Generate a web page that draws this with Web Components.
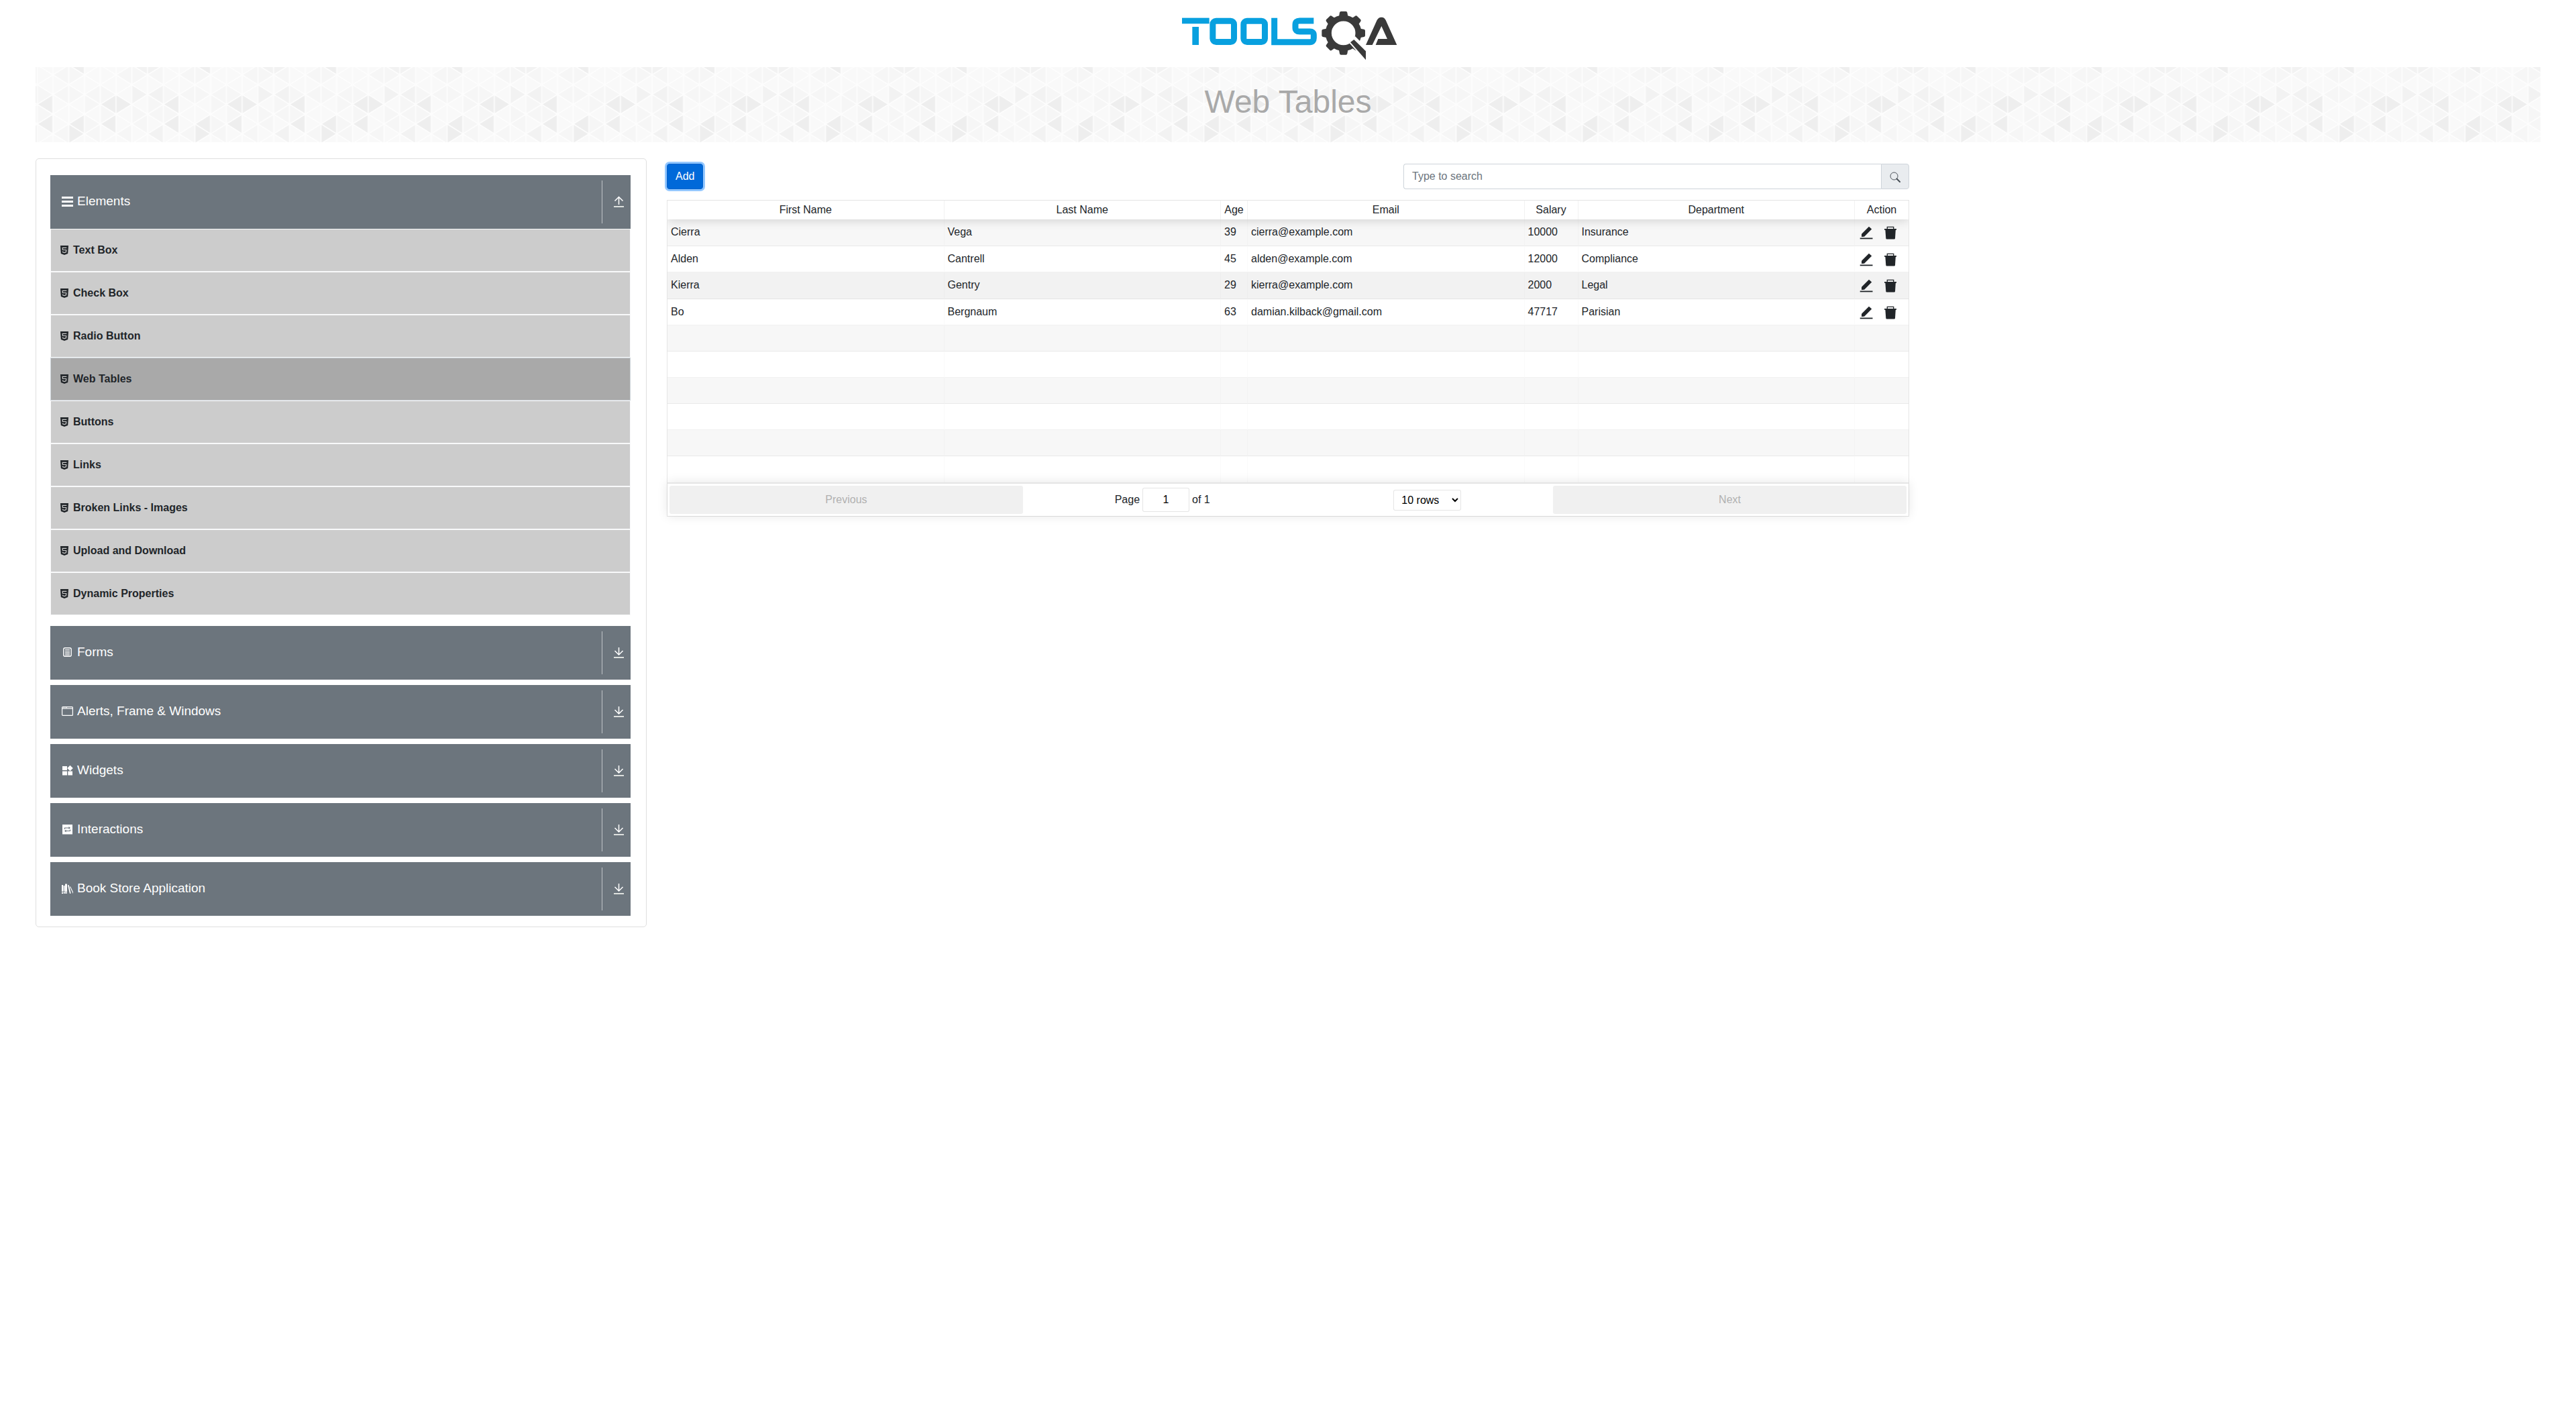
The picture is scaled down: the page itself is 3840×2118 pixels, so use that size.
<!DOCTYPE html>
<html lang="en">
<head>
<meta charset="utf-8">
<title>ToolsQA - Web Tables</title>
<style>
  body {
    margin: 0;
    background: #fff;
    color: #212529;
    font: 16px/24px "Liberation Sans", Arial, sans-serif;
  }
</style>
</head>
<body>
<qa-page>
  <qa-logo slot="logo"></qa-logo>
  <qa-banner slot="banner">Web Tables</qa-banner>
  <qa-sidebar slot="sidebar">
    <qa-group icon="menu" label="Elements" open>
      <qa-item>Text Box</qa-item>
      <qa-item>Check Box</qa-item>
      <qa-item>Radio Button</qa-item>
      <qa-item active>Web Tables</qa-item>
      <qa-item>Buttons</qa-item>
      <qa-item>Links</qa-item>
      <qa-item>Broken Links - Images</qa-item>
      <qa-item>Upload and Download</qa-item>
      <qa-item>Dynamic Properties</qa-item>
    </qa-group>
    <qa-group icon="form" label="Forms"></qa-group>
    <qa-group icon="window" label="Alerts, Frame &amp; Windows"></qa-group>
    <qa-group icon="widgets" label="Widgets"></qa-group>
    <qa-group icon="swap" label="Interactions"></qa-group>
    <qa-group icon="books" label="Book Store Application"></qa-group>
  </qa-sidebar>
  <qa-toolbar></qa-toolbar>
  <qa-table></qa-table>
</qa-page>

<script>
const BASE = `<style>*{box-sizing:border-box}:host{display:block}button,input,select{font:inherit;color:inherit;margin:0}svg{display:block}</style>`;

function define(name, render) {
  customElements.define(name, class extends HTMLElement {
    connectedCallback() {
      if (this.shadowRoot) return;
      this.attachShadow({ mode: 'open' }).innerHTML = BASE + render(this);
    }
  });
}

const ICONS = {
  menu: `<path fill="#fff" d="M1 2h17v3H1zM1 8h17v3H1zM1 14h17v3H1z"/>`,
  form: `<rect x="3.800" y="2.800" width="11.400" height="12.400" rx="2" fill="none" stroke="#fff" stroke-width="1.400"/><path stroke="#fff" d="M6 5.500h7M6 7.500h7M6 9.500h7M6 11.500h7M6 13.200h7"/>`,
  window: `<rect x="1.600" y="2.600" width="15.800" height="12.800" rx="1" fill="none" stroke="#fff" stroke-width="1.200"/><path d="M2 5h15" stroke="#fff" stroke-width="1.200"/><path d="M3 3.800h1.200M5.200 3.800h1.200M7.200 3.800H9" stroke="#fff"/>`,
  widgets: `<path fill="#fff" d="M2 3h7v6H2zM2 10.500h7v6H2zM10.300 10.500h6.700v6h-6.700zM13.500 1.700l4.300 4.300-4.300 4.300L9.200 6z"/>`,
  swap: `<rect x="2" y="2" width="15" height="14.500" fill="#fff"/><g fill="none" stroke="#6c757d" stroke-width="1.100"><path d="M5.500 9V7h6.500M13.500 9.500v2H7"/></g><path fill="#6c757d" d="M11.500 5l2.500 2-2.500 2zM7.500 9.500L5 11.500l2.500 2z"/>`,
  books: `<path fill="#fff" d="M1 4h2v10H1zM1 15h2v2H1zM3.600 5h2v8h-2zM6 2.500h3V14H6zM10 4.500l1.700-.4 3 12.500-1.700.4z"/><path fill="#d3d6d9" d="M3.600 13.500H9V17H3.600z"/><path stroke="#fff" stroke-width="1.100" d="M13.500 6.500l4.800 10"/>`
};

define('qa-page', () => `
<style>
  .cols{display:grid;grid-template-columns:1fr 2fr 1fr;padding:0 38px;margin-top:24px;align-items:start}
  aside,main{padding:0 15px;min-width:0}
  main{padding-top:8px}
  .banner{padding:0 53px}
</style>
<header><slot name="logo"></slot><div class="banner"><slot name="banner"></slot></div></header>
<div class="cols"><aside><slot name="sidebar"></slot></aside><main><slot></slot></main></div>`);

define('qa-logo', () => {
  const teeth = [0, 45, 90, 135, 180, 225, 270, 315]
    .map(a => `<path transform="rotate(${a} 788 148)" d="M766 84L771 56Q772 51 777 51H799Q804 51 805 56L810 84Z"/>`).join('');
  return `
<style>a{display:flex;justify-content:center}</style>
<a href="#" aria-label="ToolsQA home"><svg width="328" height="100" viewBox="48 0 984 300">
  <g fill="#08a0df"><rect x="66" y="80" width="122" height="26"/><rect x="112" y="120" width="29" height="81"/></g>
  <g fill="none" stroke="#08a0df" stroke-width="27">
    <rect x="203.500" y="93.500" width="95" height="94" rx="15"/>
    <rect x="341.500" y="93.500" width="95" height="94" rx="15"/>
    <path d="M655 93H592Q573 93 573 110V124Q573 141 592 141H638Q655 141 655 156V170Q655 188 638 188H479V80"/>
  </g>
  <g fill="#3a3a3a">
    <circle cx="788" cy="148" r="67" fill="none" stroke="#3a3a3a" stroke-width="27"/>
    ${teeth}
    <path d="M812 190L840 162L900 222V290Z" fill="#fff"/>
    <path d="M819 189L835 177L888 229V268Z"/>
    <path d="M888 201L938 90Q945 77 958 77Q971 77 977 90L1027 201H932L943 174H984L958 117L917 201Z"/>
  </g>
</svg></a>`;
});

/* Banner backdrop: a repeating 8-column mesh of triangles. */
function mesh() {
  const w = 23.5, h = 14.65;
  const dark = ['0,4', '0,6', '2,6', '2,7', '2,0', '4,4', '5,4', '4,6'];
  const mid = ['6,3', '7,3', '7,7', '6,0', '7,0'];
  const soft = ['1,1', '2,1', '0,3', '1,3', '2,3', '3,3', '5,1', '6,1', '7,1', '3,4', '7,5', '6,5', '3,6', '0,5', '1,7', '5,7', '7,4', '4,3', '3,7', '6,6', '4,5'];
  let out = '';
  for (let k = 0; k < 8; k++) for (let n = 0; n < 9; n++) {
    const key = k + ',' + n, c = h * n - 3, x = k * w;
    const [tip, edge] = (k + n) % 2 ? [x + w, x] : [x, x + w];
    const fill = dark.includes(key) ? '#eeeeee' : mid.includes(key) ? '#f2f2f2' : soft.includes(key) ? '#f6f6f6' : '#f9f9f9';
    out += `<path d="M${tip} ${c}L${edge} ${c - h}V${c + h}Z" fill="${fill}"/>`;
  }
  return out;
}

define('qa-banner', () => `
<style>
  :host{display:grid;height:112px;overflow:hidden}
  svg,h1{grid-area:1/1}
  svg{width:100%;height:112px}
  h1{margin:0;padding-top:23px;font-size:48px;line-height:58px;font-weight:400;color:#a9a9a9;text-align:center;z-index:1}
</style>
<svg aria-hidden="true"><defs><pattern id="m" x="2.500" width="188" height="120" patternUnits="userSpaceOnUse"><g stroke="#fdfdfd" stroke-width="1.500">${mesh()}</g></pattern></defs><rect width="100%" height="112" fill="url(#m)"/></svg>
<h1><slot></slot></h1>`);

define('qa-sidebar', () => `
<style>
  nav{display:flex;flex-direction:column;gap:8px;border:1px solid #dfdfdf;border-radius:5px;padding:24px 23px 16px 21px}
</style>
<nav><slot></slot></nav>`);

define('qa-group', el => {
  const open = el.hasAttribute('open');
  const arrow = open
    ? `<path d="M8.500 13V2M2.500 7.500L8.500 1.500L14.500 7.500"/>`
    : `<path d="M8.500 1V12M2.500 6L8.500 12L14.500 6"/>`;
  return `
<style>
  button{display:flex;align-items:center;width:100%;height:80px;padding:8px 0 8px 16px;border:0;background:#6c757d;color:#fff;font-size:19px;text-align:left}
  .t{display:flex;align-items:center;gap:6px;flex:1;padding-bottom:3px}
  .a{display:flex;align-items:center;height:64px;border-left:1px solid #bfc3c7;padding:0 9px 0 16px}
  :host([open]){padding-bottom:8px}
</style>
<button type="button" aria-expanded="${open}"><span class="t"><svg width="18" height="18" viewBox="0 0 18 18" aria-hidden="true">${ICONS[el.getAttribute('icon')]}</svg><span>${el.getAttribute('label').replace('&', '&amp;')}</span></span>
<span class="a"><svg width="17" height="18" viewBox="0 0 17 18" fill="none" stroke="#fff" stroke-width="1.500" aria-hidden="true">${arrow}<path d="M1 16H16" stroke="#dde0dd" stroke-width="2"/></svg></span></button>
<slot></slot>`;
});

define('qa-item', () => `
<style>
  a{display:flex;align-items:center;gap:7px;height:64px;padding:0 14px;border:1px solid #f8f9fa;background:#ccc;color:#212529;font-weight:700;text-decoration:none}
  :host([active]) a{background:#a9a9a9;border-color:#ced4da}
</style>
<a href="#"><svg width="12" height="14" viewBox="0 0 12 14" aria-hidden="true"><path fill="#212529" d="M0 0H12L11.200 12L6 14L.8 12Z"/><path d="M9.300 3.300H3.200L3.500 6.500H8.700L8.400 9.700L6 10.500L3.600 9.700L3.500 8.600" fill="none" stroke="#ccc" stroke-width="1.200"/></svg><slot></slot></a>`);

define('qa-toolbar', () => `
<style>
  :host{display:flex;justify-content:space-between;margin-bottom:16px}
  .add{height:38px;padding:0 12px;border:1px solid #0062cc;border-radius:4px;background:#0069d9;color:#fff;line-height:24px;box-shadow:0 0 0 3px #93c7ff}
  form{display:flex;width:754px;max-width:60%;height:38px}
  input{flex:1;min-width:0;padding:0 12px;border:1px solid #ced4da;border-right:0;border-radius:4px 0 0 4px;background:#fff;outline:0}
  input::placeholder{color:#6c757d;opacity:1}
  form button{padding:2px 12px 0;border:1px solid #ced4da;border-radius:0 4px 4px 0;background:#e9ecef}
</style>
<button class="add" type="button">Add</button>
<form role="search"><input type="text" placeholder="Type to search" aria-label="Type to search"><button type="button" aria-label="Search"><svg width="16" height="16" viewBox="0 0 16 16" fill="none" stroke="#495057"><circle cx="6.500" cy="6.500" r="5.500"/><path d="M10.500 10.500L15 15" stroke-width="2" stroke-linecap="round"/></svg></button></form>`);

define('qa-table', () => {
  const heads = ['First Name', 'Last Name', 'Age', 'Email', 'Salary', 'Department', 'Action'];
  const rows = [
    ['Cierra', 'Vega', '39', 'cierra@example.com', '10000', 'Insurance'],
    ['Alden', 'Cantrell', '45', 'alden@example.com', '12000', 'Compliance'],
    ['Kierra', 'Gentry', '29', 'kierra@example.com', '2000', 'Legal'],
    ['Bo', 'Bergnaum', '63', 'damian.kilback@gmail.com', '47717', 'Parisian']
  ];
  const actions = name => `<div class="act">
    <button type="button" aria-label="Edit ${name}"><svg width="24" height="24" viewBox="0 0 24 24" fill="#212529"><path d="M16 3.700L20.200 7.500L9 18.800L5 19V14.700Z"/><path d="M2.700 20.500H21.500V22.300H2.700Z"/></svg></button>
    <button type="button" aria-label="Delete ${name}"><svg width="24" height="24" viewBox="0 0 24 24" fill="#212529"><path d="M7.300 8V4.300H16.700V8" fill="none" stroke="#212529" stroke-width="1.300"/><path d="M3 7H21V8.800H19.800L19 21.200Q18.900 22.500 17.600 22.500H6.600Q5.400 22.500 5.300 21.200L4.400 8.800H3Z"/></svg></button></div>`;
  const body = rows.map((r, i) => `<tr class="full${i === 2 ? ' hover' : ''}">${r.map(c => `<td>${c}</td>`).join('')}<td>${actions(r[0])}</td></tr>`).join('')
    + `<tr>${'<td></td>'.repeat(7)}</tr>`.repeat(6);
  return `
<style>
  .box{border:1px solid rgba(0,0,0,.1)}
  .clip{overflow:hidden}
  table{width:100%;table-layout:fixed;border-collapse:separate;border-spacing:0}
  .n{width:40px}.m{width:80px}
  thead{box-shadow:0 2px 15px rgba(0,0,0,.15);position:relative}
  th{height:28px;padding:2px 5px;font-weight:400;line-height:24px;border-right:1px solid rgba(0,0,0,.05)}
  td{height:39px;padding:7px 5px 0;line-height:24px;vertical-align:top;border-right:1px solid rgba(0,0,0,.02);border-bottom:1px solid rgba(0,0,0,.05)}
  th:last-child,td:last-child{border-right:0}
  tr:last-child td{border-bottom:0}
  .full:nth-child(odd) td{height:40px}
  tbody tr:nth-child(odd){background:rgba(0,0,0,.03)}
  tbody tr.hover{background:rgba(0,0,0,.05)}
  .act{display:flex;gap:12px}
  .act button{padding:0;border:0;background:none}
  .foot{display:flex;align-items:stretch;padding:3px;border-top:2px solid rgba(0,0,0,.1);box-shadow:0 0 15px rgba(0,0,0,.1);position:relative}
  .foot>button{flex:1;height:42px;padding:0;border:0;border-radius:3px;background:#f0f0f0;color:#b0b0b0}
  .mid{flex:1.5;display:flex;align-items:center;justify-content:space-around}
  .mid>*{margin:0 10px}
  .page{display:flex;align-items:center;gap:4px}
  .page input{width:70px;height:36px;margin:0;padding:0;text-align:center;border:1px solid rgba(0,0,0,.1);border-radius:3px;color:#000}
  select{width:101px;height:31px;padding:0 7px;border:1px solid rgba(0,0,0,.1);border-radius:3px;background:#fff;color:#000}
</style>
<div class="box"><div class="clip"><table>
  <colgroup><col><col><col class="n"><col><col class="m"><col><col class="m"></colgroup>
  <thead><tr>${heads.map(t => `<th scope="col">${t}</th>`).join('')}</tr></thead>
  <tbody>${body}</tbody>
</table></div>
<div class="foot"><button type="button" disabled>Previous</button>
  <div class="mid"><span class="page"><label for="pg">Page</label><input id="pg" type="text" value="1"><span>of 1</span></span>
  <select aria-label="Rows per page"><option>5 rows</option><option selected>10 rows</option><option>20 rows</option><option>25 rows</option><option>50 rows</option><option>100 rows</option></select></div>
  <button type="button" disabled>Next</button></div></div>`;
});
</script>
</body>
</html>
